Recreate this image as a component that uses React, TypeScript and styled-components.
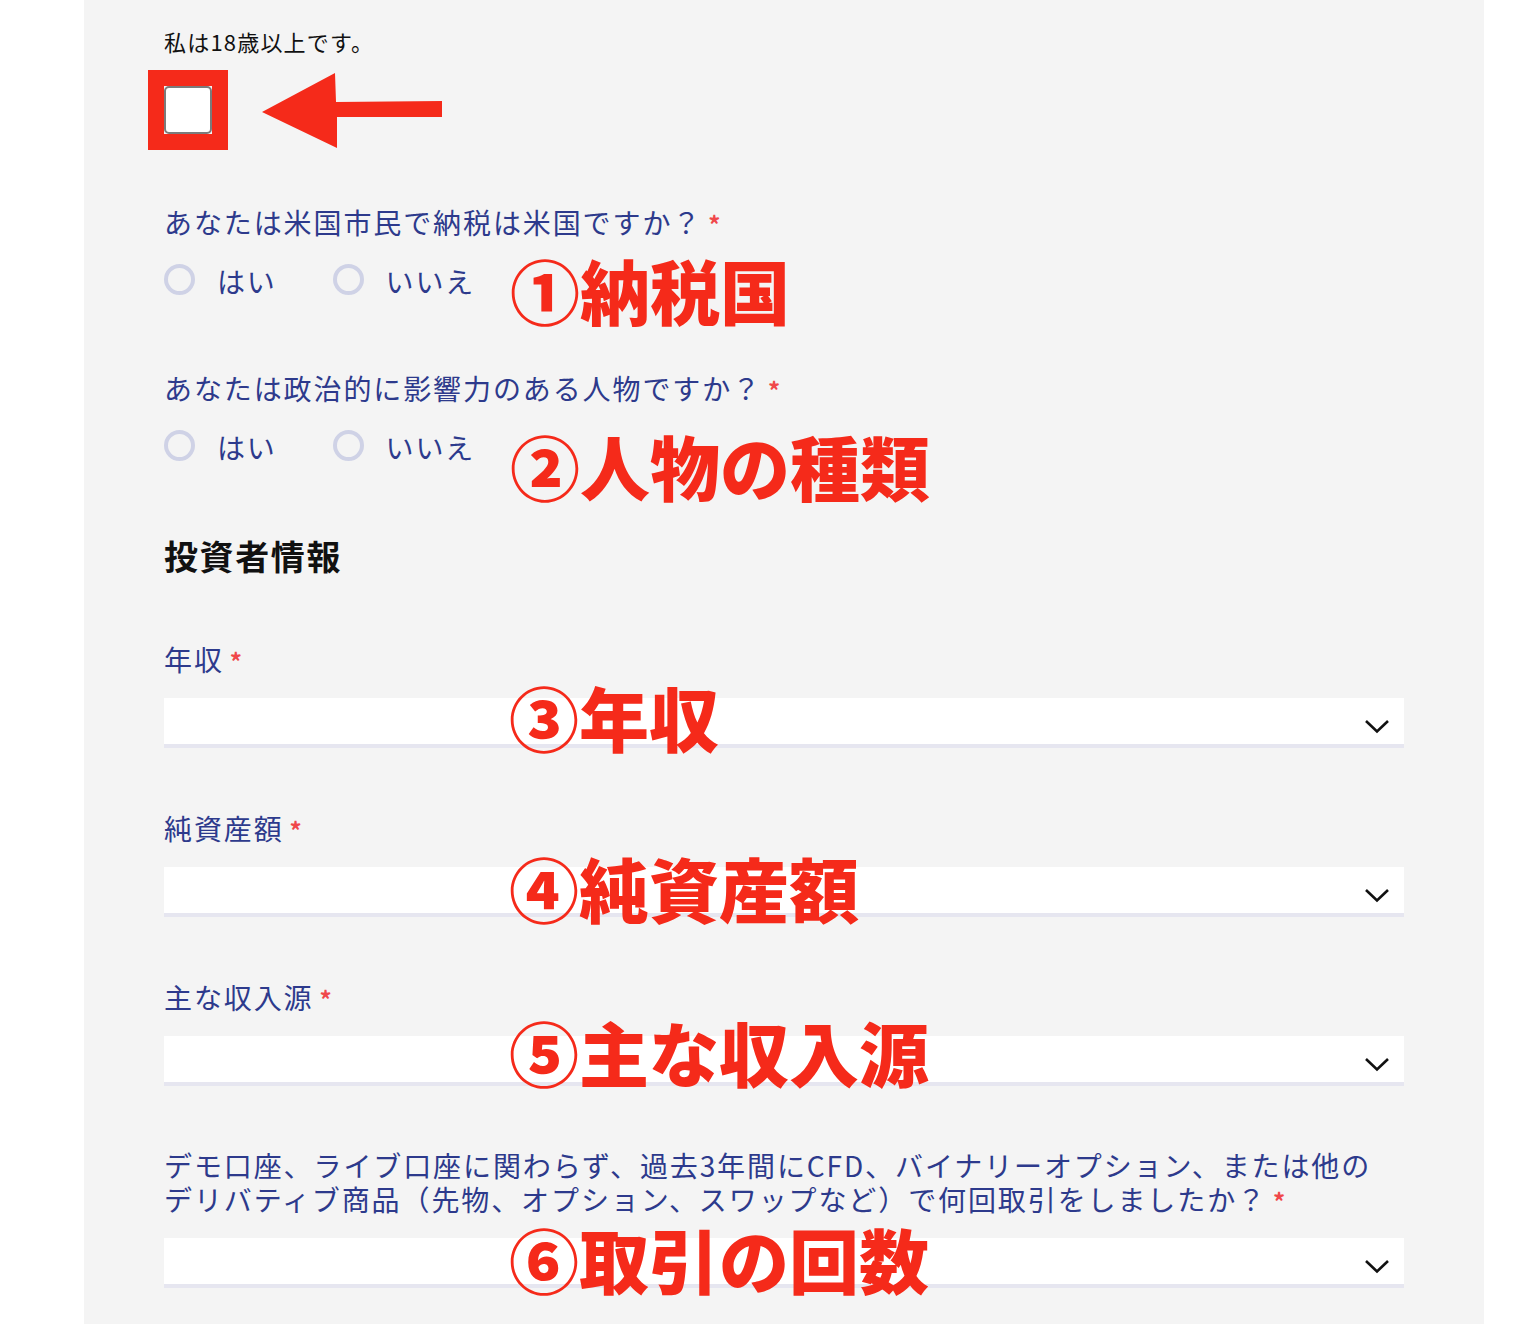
import { FC } from "react";
import styled, { createGlobalStyle } from "styled-components";

const GlobalStyle = createGlobalStyle`
  html, body {
    margin: 0;
    padding: 0;
    background: #ffffff;
  }
  body {
    font-family: "Noto Sans CJK JP", "Noto Sans", sans-serif;
  }
`;

const Page = styled.div`
  padding-left: 84px;
`;

const Panel = styled.div`
  width: 1400px;
  min-height: 1324px;
  background: #f4f4f4;
  box-sizing: border-box;
  padding: 26px 80px 40px;
`;

const Form = styled.form`
  display: flex;
  flex-direction: column;
  width: 1240px;
`;

const AgeText = styled.p`
  margin: 0;
  font-size: 22px;
  line-height: 30px;
  letter-spacing: 1.2px;
  color: #111111;
`;

const CheckRow = styled.div`
  display: flex;
  align-items: center;
  margin-top: 14px;
`;

const CheckFrame = styled.div`
  display: flex;
  margin-left: -16px;
  border: 16px solid #f52a1a;
`;

const CheckBox = styled.input`
  appearance: none;
  margin: 0;
  width: 48px;
  height: 48px;
  box-sizing: border-box;
  background: #ffffff;
  border: 2px solid #7b7b7b;
  border-radius: 5px;
`;

const Arrow = styled.svg`
  margin-left: 34px;
  flex-shrink: 0;
`;

const Group = styled.div<{ $top: number }>`
  position: relative;
  margin-top: ${(p) => p.$top}px;
`;

const Label = styled.label`
  display: block;
  font-size: 28px;
  line-height: 34px;
  letter-spacing: 1.9px;
  color: #2d3a8c;
  white-space: pre-line;
`;

const Star = styled.span`
  color: #f0474a;
  font-weight: 700;
  font-size: 24px;
  margin-left: 6px;
  letter-spacing: 0;
`;

const RadioRow = styled.div`
  display: flex;
  align-items: center;
  gap: 56px;
  margin-top: 23px;
  height: 34px;
`;

const RadioOption = styled.label`
  display: flex;
  align-items: center;
  gap: 22px;
  font-size: 28px;
  line-height: 34px;
  letter-spacing: 1.8px;
  color: #2d3a8c;
`;

const Radio = styled.input`
  appearance: none;
  margin: 0;
  width: 31px;
  height: 31px;
  box-sizing: border-box;
  border: 4px solid #cfd2e6;
  border-radius: 50%;
  background: transparent;
  position: relative;
  top: -2px;
`;

const Heading = styled.h2`
  margin: 70px 0 0;
  font-size: 34px;
  line-height: 44px;
  font-weight: 700;
  letter-spacing: 1.6px;
  color: #111111;
`;

const SelectBox = styled.div`
  position: relative;
  margin-top: 20px;
`;

const Select = styled.select`
  appearance: none;
  display: block;
  width: 100%;
  height: 50px;
  box-sizing: border-box;
  background: #ffffff;
  border: none;
  border-bottom: 4px solid #e6e6f0;
  border-radius: 0;
  outline: none;
`;

const Chevron = styled.svg`
  position: absolute;
  right: 14px;
  top: 21px;
  pointer-events: none;
`;

const Note = styled.span<{ $top: number; $left: number }>`
  position: absolute;
  left: ${(p) => p.$left}px;
  top: ${(p) => p.$top + 4}px;
  font-size: 70px;
  line-height: 62px;
  font-weight: 900;
  color: #f52a1a;
  white-space: nowrap;
  pointer-events: none;
`;

interface IQuestion {
  text: string;
  note: string;
  top: number;
  noteTop: number;
}

const questions: IQuestion[] = [
  { text: "あなたは米国市民で納税は米国ですか？", note: "①納税国", top: 55, noteTop: 50 },
  { text: "あなたは政治的に影響力のある人物ですか？", note: "②人物の種類", top: 73, noteTop: 60 },
];

const selects: IQuestion[] = [
  { text: "年収", note: "③年収", top: 64, noteTop: 40 },
  { text: "純資産額", note: "④純資産額", top: 63, noteTop: 42 },
  { text: "主な収入源", note: "⑤主な収入源", top: 63, noteTop: 37 },
  {
    text: "デモ口座、ライブ口座に関わらず、過去3年間にCFD、バイナリーオプション、または他の\nデリバティブ商品（先物、オプション、スワップなど）で何回取引をしましたか？",
    note: "⑥取引の回数",
    top: 62,
    noteTop: 76,
  },
];

const RadioQuestion: FC<{ item: IQuestion; name: string }> = ({ item, name }) => (
  <Group $top={item.top}>
    <Label>
      {item.text}
      <Star>*</Star>
    </Label>
    <RadioRow>
      <RadioOption>
        <Radio type="radio" name={name} />
        はい
      </RadioOption>
      <RadioOption>
        <Radio type="radio" name={name} />
        いいえ
      </RadioOption>
    </RadioRow>
    <Note $left={346} $top={item.noteTop}>
      {item.note}
    </Note>
  </Group>
);

const SelectQuestion: FC<{ item: IQuestion }> = ({ item }) => (
  <Group $top={item.top}>
    <Label>
      {item.text}
      <Star>*</Star>
    </Label>
    <SelectBox>
      <Select defaultValue="">
        <option value=""></option>
      </Select>
      <Chevron width="26" height="15" viewBox="0 0 26 15">
        <polyline
          points="2,2 13,12.5 24,2"
          fill="none"
          stroke="#111111"
          strokeWidth="2.6"
        />
      </Chevron>
    </SelectBox>
    <Note $left={345} $top={item.noteTop}>
      {item.note}
    </Note>
  </Group>
);

const App: FC = () => {
  return (
    <>
      <GlobalStyle />
      <Page>
        <Panel>
          <Form>
            <AgeText>私は18歳以上です。</AgeText>
            <CheckRow>
              <CheckFrame>
                <CheckBox type="checkbox" />
              </CheckFrame>
              <Arrow width="180" height="80" viewBox="0 0 180 80">
                <polygon
                  points="0,42 73,3 74,32 180,31 180,47 75,47 75,78"
                  fill="#f52a1a"
                />
              </Arrow>
            </CheckRow>

            {questions.map((item, index) => (
              <RadioQuestion item={item} name={`q${index}`} key={index} />
            ))}

            <Heading>投資者情報</Heading>

            {selects.map((item, index) => (
              <SelectQuestion item={item} key={index} />
            ))}
          </Form>
        </Panel>
      </Page>
    </>
  );
};

export default App;
